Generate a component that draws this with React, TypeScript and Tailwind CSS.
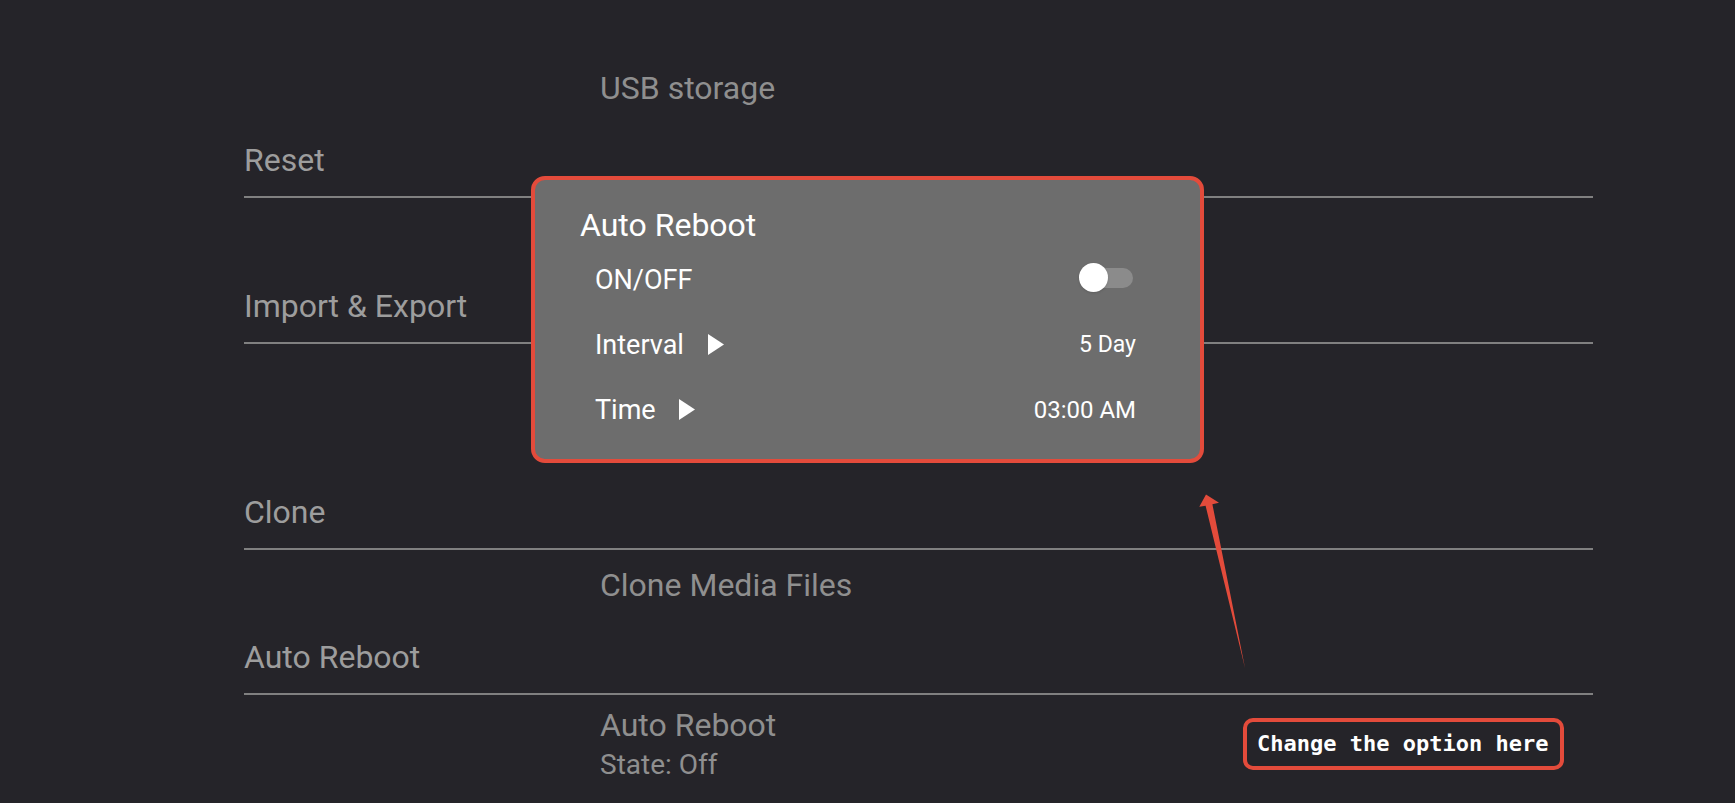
import React from 'react';

const rowText = 'text-[32px] leading-[36px] text-[#9d9d9d]';
const subText = 'ml-[356px] text-[32px] leading-[36px] text-[#8f8f8f]';

const Divider = ({ className }: { className: string }) => (
  <div className={`h-[2px] w-[1349px] bg-[#808080] ${className}`} />
);

const Arrow = ({ className }: { className: string }) => (
  <svg viewBox="0 0 16 21" className={className} fill="#ffffff">
    <polygon points="0,0 16,10.5 0,21" />
  </svg>
);

const Toggle = () => (
  <div className="relative mr-[3px] -mt-[4px] h-[20px] w-[50px] rounded-full bg-[#8b8b8b]">
    {/* knob */}
    <div className="absolute left-[-4px] top-[-4.5px] h-[29px] w-[29px] rounded-full bg-white shadow-sm" />
  </div>
);

export default function App() {
  return (
    <div
      className="relative h-[803px] w-[1735px] overflow-hidden bg-[#252429]"
      style={{ fontFamily: 'Roboto, "Noto Sans", sans-serif' }}
    >
      {/* Settings list */}
      <div className="flex flex-col pl-[244px] pt-[70px]">
        <div className={subText}>USB storage</div>
        <div className={`mt-[36px] ${rowText}`}>Reset</div>
        <Divider className="mt-[18px]" />
        <div className={`mt-[90px] ${rowText}`}>Import &amp; Export</div>
        <Divider className="mt-[18px]" />
        <div className={`mt-[150px] ${rowText}`}>Clone</div>
        <Divider className="mt-[18px]" />
        <div className={`mt-[17px] ${subText}`}>Clone Media Files</div>
        <div className={`mt-[36px] ${rowText}`}>Auto Reboot</div>
        <Divider className="mt-[18px]" />
        <div className={`mt-[12px] ${subText}`}>Auto Reboot</div>
        <div className="mt-[5px] ml-[356px] text-[28px] leading-[34px] text-[#8f8f8f]">State: Off</div>
      </div>

      {/* Auto Reboot dialog */}
      <div className="absolute left-[531px] top-[176px] h-[287px] w-[673px] rounded-[14px] border-4 border-[#e34b3b] bg-[#6d6d6d] pl-[45px] pr-[64px] pt-[27px] text-white">
        <div className="text-[32px] leading-[36px]">Auto Reboot</div>
        <div className="mt-[4px] flex flex-col pl-[15px]">
          <div className="flex h-[65px] items-center justify-between">
            <span className="text-[27px] leading-[32px]">ON/OFF</span>
            <Toggle />
          </div>
          <div className="flex h-[65px] items-center justify-between">
            <div className="flex items-center gap-[24px]">
              <span className="text-[27px] leading-[32px]">Interval</span>
              <Arrow className="h-[21px] w-[16px]" />
            </div>
            <span className="text-[23px] leading-[28px]">5 Day</span>
          </div>
          <div className="flex h-[65px] items-center justify-between">
            <div className="flex items-center gap-[23px]">
              <span className="text-[27px] leading-[32px]">Time</span>
              <Arrow className="h-[21px] w-[16px]" />
            </div>
            <span className="text-[24px] leading-[28px]">03:00 AM</span>
          </div>
        </div>
      </div>

      {/* annotation arrow */}
      <svg
        className="pointer-events-none absolute left-0 top-0 h-[803px] w-[1735px]"
        viewBox="0 0 1735 803"
      >
        <polygon
          points="1245,668 1212.4,504.2 1219,502.7 1206,494.5 1199.3,506.7 1205.6,505.8"
          fill="#e34b3b"
        />
      </svg>

      {/* annotation label */}
      <div className="absolute left-[1243px] top-[718px] flex h-[52px] w-[321px] items-center rounded-[10px] border-4 border-[#e34b3b] pl-[10px]">
        <span
          className="text-[22px] font-bold leading-[26px] text-white"
          style={{ fontFamily: '"DejaVu Sans Mono", "Liberation Mono", monospace' }}
        >
          Change the option here
        </span>
      </div>
    </div>
  );
}
